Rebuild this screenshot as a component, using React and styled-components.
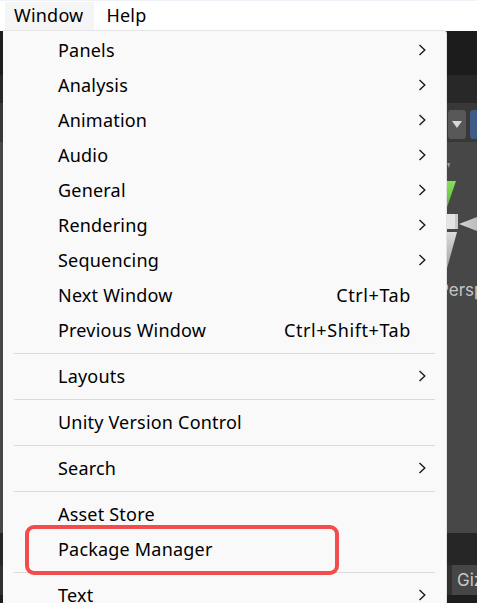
import React from 'react'
import styled, { createGlobalStyle } from 'styled-components'

const GlobalStyle = createGlobalStyle`
  html, body {
    margin: 0;
    padding: 0;
    background: #1e1e1e;
  }
  * {
    box-sizing: border-box;
  }
`;

const Page = styled.div`
  position: relative;
  width: 477px;
  height: 603px;
  overflow: hidden;
  display: flex;
  flex-direction: column;
  font-family: "Noto Sans", "Open Sans", sans-serif;
`;

/* ---------- top menu bar ---------- */
const MenuBar = styled.div`
  height: 31px;
  flex: none;
  display: flex;
  align-items: stretch;
  gap: 3px;
  padding: 1px 0 1px 5px;
  background: #ffffff;
  border-top: 1px solid #eef1f8;
`;
const BarItem = styled.div`
  display: flex;
  align-items: center;
  padding: 0 11px 2px 9px;
  font-size: 18px;
  letter-spacing: 0.2px;
  color: #000;
  background: ${p => (p.$active ? '#f5f5f5' : 'transparent')};
`;

/* ---------- unity editor behind the menu ---------- */
const Editor = styled.div`
  flex: 1;
  display: flex;
  flex-direction: column;
  background: #1e1e1e;
  font-family: Inter, "Noto Sans", sans-serif;
`;
const TitleStrip = styled.div`
  height: 44px;
  background: #1c1c1c;
`;
const TabStrip = styled.div`
  height: 28px;
  background: #282828;
`;
const SceneToolbar = styled.div`
  height: 39px;
  display: flex;
  align-items: flex-start;
  gap: 4px;
  padding: 7px 0 0 448px;
  background: #383838;
`;
const ToolButton = styled.div`
  flex: none;
  width: ${p => p.$w}px;
  height: 29px;
  border-radius: 3px;
  background: ${p => (p.$blue ? '#3e5c85' : '#575757')};
  display: flex;
  align-items: center;
  justify-content: center;
`;
const SceneView = styled.div`
  position: relative;
  height: 391px;
  background: #474747;
`;
const Gizmo = styled.svg`
  position: absolute;
  left: 430px;
  top: 13px;
`;
const ViewLabel = styled.div`
  position: absolute;
  left: 438px;
  top: 140px;
  font-size: 17px;
  line-height: 17px;
  color: #c4c4c4;
`;
const BottomTabs = styled.div`
  height: 32px;
  background: #262626;
`;
const StatusStrip = styled.div`
  height: 30px;
  display: flex;
  padding-left: 448px;
  background: #303030;
`;
const StatusButton = styled.div`
  flex: none;
  width: 60px;
  margin-left: 4px;
  display: flex;
  align-items: center;
  padding-left: 5px;
  background: #464646;
  font-size: 17px;
  color: #c8c8c8;
`;

/* ---------- dropdown menu ---------- */
const Dropdown = styled.div`
  position: absolute;
  left: 3px;
  top: 30px;
  width: 444px;
  height: 600px;
  padding: 2px 0;
  background: #f9f9f9;
  border-top: 1px solid #e6e6e6;
  border-right: 1px solid #e2e2e2;
  border-radius: 0 4px 0 0;
`;
const Item = styled.div`
  height: 35px;
  display: flex;
  align-items: center;
  padding: 0 0 2px 55px;
  font-size: 18px;
  letter-spacing: 0.2px;
  color: #000;
`;
const Label = styled.span`
  flex: 1;
  white-space: nowrap;
`;
const Shortcut = styled.span`
  white-space: nowrap;
  letter-spacing: 0.6px;
`;
const Trail = styled.span`
  flex: none;
  width: 35px;
  padding-left: 7px;
  display: flex;
  align-items: center;
`;
const Separator = styled.div`
  height: 1px;
  margin: 5px 11px;
  background: #dadada;
`;
const Highlight = styled.div`
  position: absolute;
  left: 25px;
  top: 525px;
  width: 314px;
  height: 50px;
  border: 4px solid #f24c4c;
  border-radius: 9px;
`;

const Chevron = () => (
  <svg width="8" height="12" viewBox="0 0 8 12">
    <path d="M1.5 1 L6.8 6 L1.5 11" fill="none" stroke="#1a1a1a" strokeWidth="1.4" />
  </svg>
);

const menu = [
  { label: 'Panels', sub: true },
  { label: 'Analysis', sub: true },
  { label: 'Animation', sub: true },
  { label: 'Audio', sub: true },
  { label: 'General', sub: true },
  { label: 'Rendering', sub: true },
  { label: 'Sequencing', sub: true },
  { label: 'Next Window', shortcut: 'Ctrl+Tab' },
  { label: 'Previous Window', shortcut: 'Ctrl+Shift+Tab' },
  'sep',
  { label: 'Layouts', sub: true },
  'sep',
  { label: 'Unity Version Control' },
  'sep',
  { label: 'Search', sub: true },
  'sep',
  { label: 'Asset Store' },
  { label: 'Package Manager' },
  'sep',
  { label: 'Text', sub: true },
];

export default function App() {
  return (
    <Page>
      <GlobalStyle />
      <MenuBar>
        <BarItem $active>Window</BarItem>
        <BarItem>Help</BarItem>
      </MenuBar>

      <Editor>
        <TitleStrip />
        <TabStrip />
        <SceneToolbar>
          <ToolButton $w={18}>
            <svg width="10" height="8" viewBox="0 0 10 8">
              <path d="M0 0 H10 L5 7 Z" fill="#d8d8d8" />
            </svg>
          </ToolButton>
          <ToolButton $w={22} $blue />
        </SceneToolbar>
        <SceneView>
          <Gizmo width="47" height="120" viewBox="430 155 47 120">
            <defs>
              <linearGradient id="ycone" x1="0" y1="0" x2="0" y2="1">
                <stop offset="0" stopColor="#86e05a" />
                <stop offset="1" stopColor="#5cb53a" />
              </linearGradient>
              <linearGradient id="ncone" x1="0" y1="0" x2="0" y2="1">
                <stop offset="0" stopColor="#dcdcdc" />
                <stop offset="1" stopColor="#9a9a9a" />
              </linearGradient>
              <linearGradient id="xcone" x1="0" y1="0" x2="1" y2="0">
                <stop offset="0" stopColor="#d6d6d6" />
                <stop offset="1" stopColor="#a8a8a8" />
              </linearGradient>
            </defs>
            <path d="M447 163 L450 163 L449 168 Z" fill="#9c9c9c" />
            <path d="M430 181 L456 181 L446 210 Z" fill="url(#ycone)" />
            <path d="M430 232 L457 232 L446 272 Z" fill="url(#ncone)" />
            <rect x="435" y="214" width="23" height="15" fill="#e4e4e4" />
            <rect x="455" y="214" width="3" height="15" fill="#c9c9c9" />
            <path d="M459 224 L490 212 L490 236 Z" fill="url(#xcone)" />
          </Gizmo>
          <ViewLabel>Persp</ViewLabel>
        </SceneView>
        <BottomTabs />
        <StatusStrip>
          <StatusButton>Gizmos</StatusButton>
        </StatusStrip>
      </Editor>

      <Dropdown>
        {menu.map((m, i) =>
          m === 'sep' ? (
            <Separator key={i} />
          ) : (
            <Item key={i}>
              <Label>{m.label}</Label>
              {m.shortcut && <Shortcut>{m.shortcut}</Shortcut>}
              <Trail>{m.sub && <Chevron />}</Trail>
            </Item>
          )
        )}
      </Dropdown>
      <Highlight />
    </Page>
  );
}
